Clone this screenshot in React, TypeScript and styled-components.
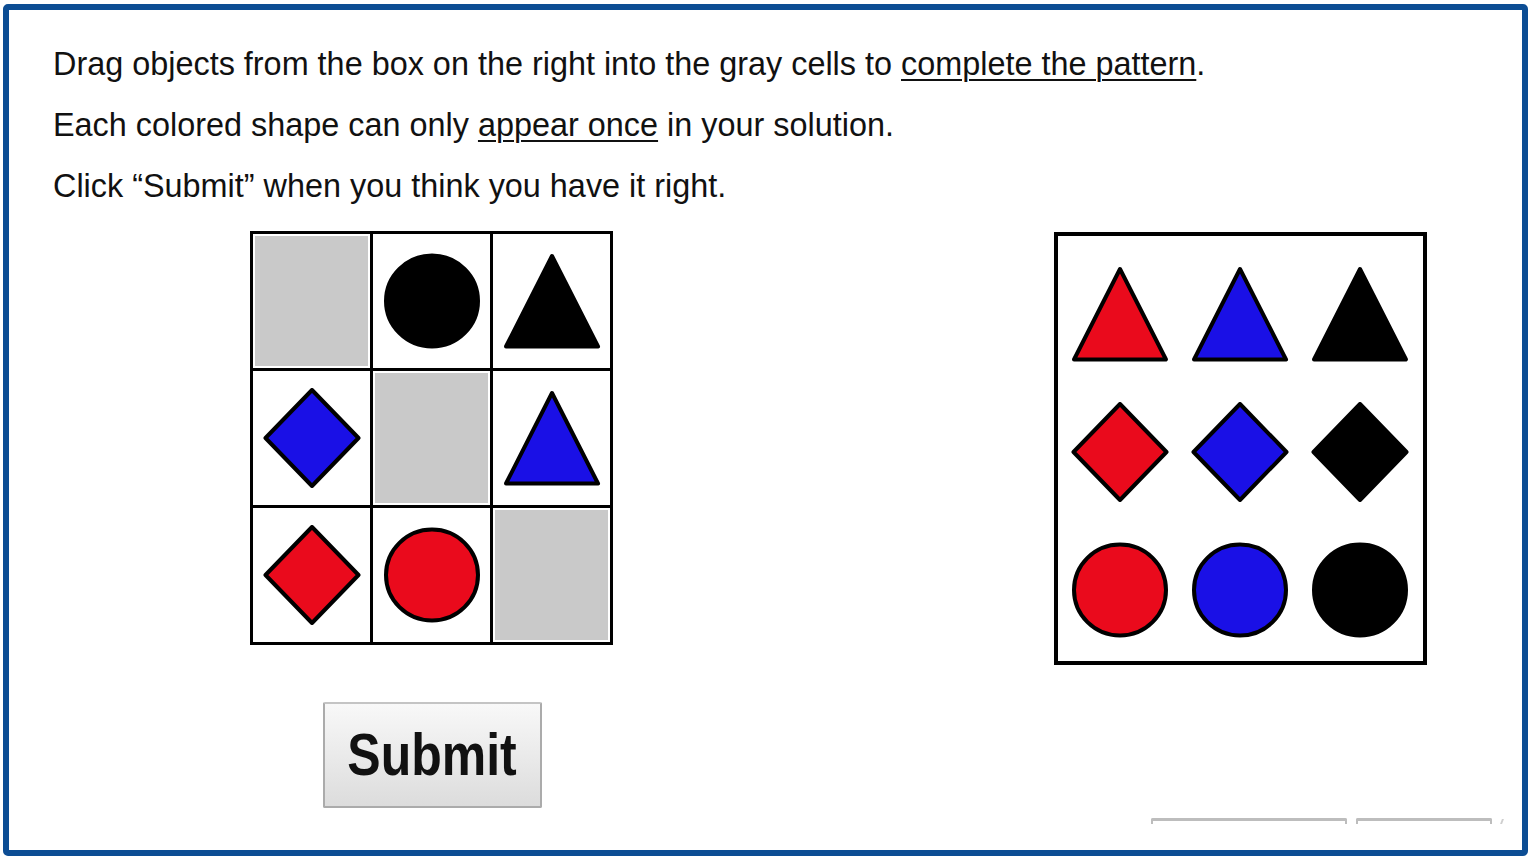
import React from 'react'
import styled, { createGlobalStyle } from 'styled-components'

const GlobalStyle = createGlobalStyle`
  html, body {
    margin: 0;
    padding: 0;
    background: #fff;
  }
  body {
    font-family: "Liberation Sans", Arial, sans-serif;
  }
`

const RED = '#ea0a1c'
const BLUE = '#1a10e6'
const BLACK = '#000'

const Frame = styled.div`
  box-sizing: border-box;
  width: 1525px;
  height: 852px;
  margin: 4px 0 0 3px;
  border: 6px solid #0c4d94;
  border-radius: 5px;
  background: #fff;
  overflow: hidden;
  display: flex;
  flex-direction: column;
  padding: 24px 0 0 44px;
`

const Instructions = styled.div`
  font-size: 32.4px;
  line-height: 61px;
  color: #111;
`

const Line = styled.div`
  white-space: nowrap;
`

const Em = styled.span`
  text-decoration: underline;
  text-decoration-thickness: 2px;
  text-underline-offset: 4px;
`

const PuzzleRow = styled.div`
  display: flex;
  align-items: flex-start;
  gap: 441px;
  margin-top: 14px;
  padding-left: 197px;
`

const LeftColumn = styled.div`
  display: flex;
  flex-direction: column;
  align-items: center;
  gap: 57px;
`

const PatternGrid = styled.div`
  display: grid;
  grid-template-columns: repeat(3, 117px);
  grid-template-rows: repeat(3, 134px);
  gap: 3px;
  padding: 3px;
  background: #000;
`

const Cell = styled.div<{ $empty?: boolean }>`
  background: #fff;
  display: flex;
  align-items: center;
  justify-content: center;
  padding: 2px;
  box-sizing: border-box;

  &::before {
    content: '';
    display: ${(p) => (p.$empty ? 'block' : 'none')};
    width: 100%;
    height: 100%;
    background: #c9c9c9;
  }
`

const SubmitButton = styled.button`
  box-sizing: border-box;
  width: 219px;
  height: 106px;
  margin-left: 1px;
  border: 2px solid #ababab;
  border-top-color: #c4c4c4;
  border-radius: 2px;
  background: linear-gradient(#f8f8f8, #e9e9e9 55%, #dcdcdc);
  font-family: "Liberation Sans", Arial, sans-serif;
  font-weight: bold;
  color: #111;
  cursor: pointer;
  padding: 0;
`

const SubmitLabel = styled.span`
  display: inline-block;
  font-size: 50px;
  transform: scaleY(1.18);
`

const PieceBox = styled.div`
  margin-top: 1px;
  border: 4px solid #000;
  padding: 9px 3px 2px 2px;
  display: grid;
  grid-template-columns: repeat(3, 120px);
  grid-template-rows: repeat(3, 138px);
  background: #fff;
`

const Piece = styled.div`
  display: flex;
  align-items: center;
  justify-content: center;
`

const Footer = styled.div`
  display: flex;
  justify-content: flex-end;
  align-items: flex-start;
  gap: 9px;
  margin-top: 10px;
  padding-right: 19px;
`

const ClippedButton = styled.div<{ $w: number }>`
  width: ${(p) => p.$w}px;
  height: 6px;
  box-sizing: border-box;
  border: 2px solid #bdbdbd;
  border-top-width: 3px;
  border-bottom: none;
  border-radius: 2px 2px 0 0;
`

const Tick = styled.div`
  width: 2px;
  height: 5px;
  margin-top: 1px;
  background: #cfcfcf;
  transform: skewX(-20deg);
`

type Kind = 'circle' | 'triangle' | 'diamond'

function Shape({ kind, color }: { kind: Kind; color: string }) {
  const stroke = '#000'
  return (
    <svg width="100" height="100" viewBox="0 0 100 100">
      {kind === 'circle' && (
        <ellipse cx="50" cy="50" rx="46" ry="45.5" fill={color} stroke={stroke} strokeWidth="4" />
      )}
      {kind === 'triangle' && (
        <polygon points="50,5 96,95.5 4,95.5" fill={color} stroke={stroke} strokeWidth="4" strokeLinejoin="round" />
      )}
      {kind === 'diamond' && (
        <polygon points="50,2 96.5,50 50,98 3.5,50" fill={color} stroke={stroke} strokeWidth="4" strokeLinejoin="round" />
      )}
    </svg>
  )
}

const pattern: ({ kind: Kind; color: string } | null)[] = [
  null,
  { kind: 'circle', color: BLACK },
  { kind: 'triangle', color: BLACK },
  { kind: 'diamond', color: BLUE },
  null,
  { kind: 'triangle', color: BLUE },
  { kind: 'diamond', color: RED },
  { kind: 'circle', color: RED },
  null,
]

const pieces: { kind: Kind; color: string }[] = [
  { kind: 'triangle', color: RED },
  { kind: 'triangle', color: BLUE },
  { kind: 'triangle', color: BLACK },
  { kind: 'diamond', color: RED },
  { kind: 'diamond', color: BLUE },
  { kind: 'diamond', color: BLACK },
  { kind: 'circle', color: RED },
  { kind: 'circle', color: BLUE },
  { kind: 'circle', color: BLACK },
]

export default function App() {
  return (
    <>
      <GlobalStyle />
      <Frame>
        <Instructions>
          <Line>
            Drag objects from the box on the right into the gray cells to <Em>complete the pattern</Em>.
          </Line>
          <Line>
            Each colored shape can only <Em>appear once</Em> in your solution.
          </Line>
          <Line>Click “Submit” when you think you have it right.</Line>
        </Instructions>

        <PuzzleRow>
          <LeftColumn>
            <PatternGrid>
              {pattern.map((p, i) => (
                <Cell key={i} $empty={!p}>
                  {p && <Shape kind={p.kind} color={p.color} />}
                </Cell>
              ))}
            </PatternGrid>
            <SubmitButton>
              <SubmitLabel>Submit</SubmitLabel>
            </SubmitButton>
          </LeftColumn>

          <PieceBox>
            {pieces.map((p, i) => (
              <Piece key={i}>
                <Shape kind={p.kind} color={p.color} />
              </Piece>
            ))}
          </PieceBox>
        </PuzzleRow>

        <Footer>
          <ClippedButton $w={196} />
          <ClippedButton $w={136} />
          <Tick />
        </Footer>
      </Frame>
    </>
  )
}
